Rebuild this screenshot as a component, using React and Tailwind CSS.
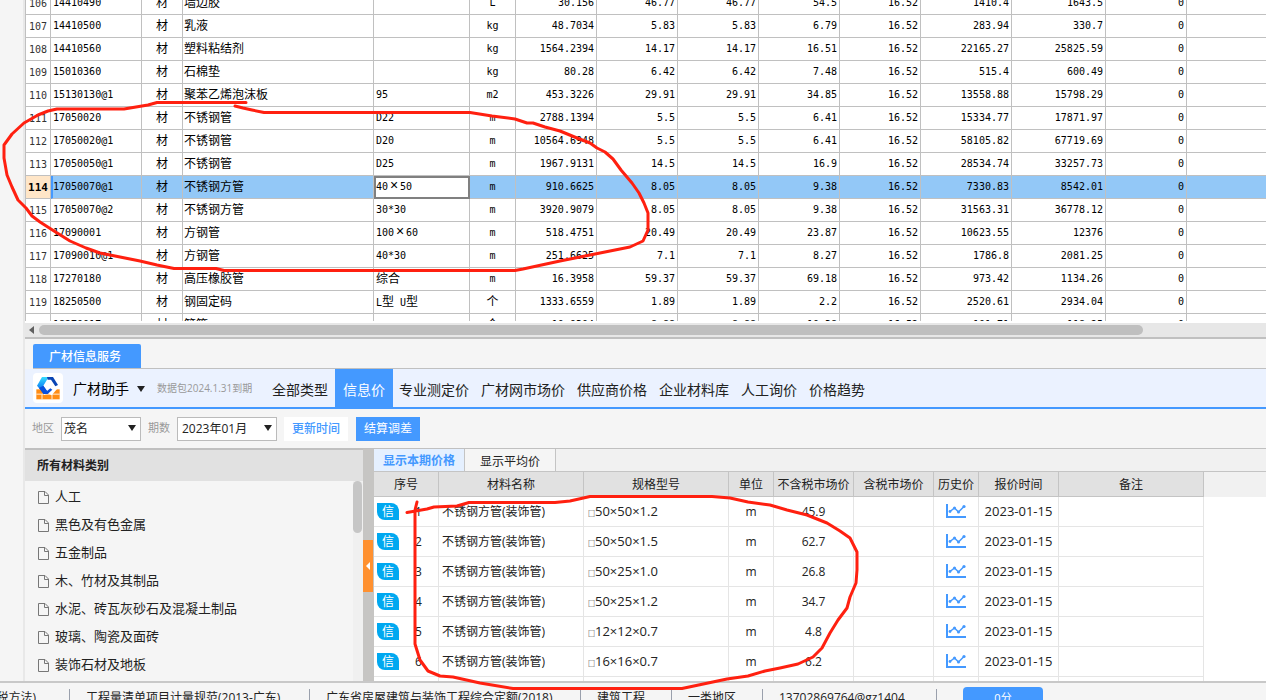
import React, { useState } from 'react';

const materials = [
    ['106', '14410490', '墙边胶', '', 'L', '30.156', '46.77', '46.77', '54.5', '16.52', '1410.4', '1643.5', '0'],
    ['107', '14410500', '乳液', '', 'kg', '48.7034', '5.83', '5.83', '6.79', '16.52', '283.94', '330.7', '0'],
    ['108', '14410560', '塑料粘结剂', '', 'kg', '1564.2394', '14.17', '14.17', '16.51', '16.52', '22165.27', '25825.59', '0'],
    ['109', '15010360', '石棉垫', '', 'kg', '80.28', '6.42', '6.42', '7.48', '16.52', '515.4', '600.49', '0'],
    ['110', '15130130@1', '聚苯乙烯泡沫板', '95', 'm2', '453.3226', '29.91', '29.91', '34.85', '16.52', '13558.88', '15798.29', '0'],
    ['111', '17050020', '不锈钢管', 'D22', 'm', '2788.1394', '5.5', '5.5', '6.41', '16.52', '15334.77', '17871.97', '0'],
    ['112', '17050020@1', '不锈钢管', 'D20', 'm', '10564.6948', '5.5', '5.5', '6.41', '16.52', '58105.82', '67719.69', '0'],
    ['113', '17050050@1', '不锈钢管', 'D25', 'm', '1967.9131', '14.5', '14.5', '16.9', '16.52', '28534.74', '33257.73', '0'],
    ['114', '17050070@1', '不锈钢方管', '40×50', 'm', '910.6625', '8.05', '8.05', '9.38', '16.52', '7330.83', '8542.01', '0'],
    ['115', '17050070@2', '不锈钢方管', '30*30', 'm', '3920.9079', '8.05', '8.05', '9.38', '16.52', '31563.31', '36778.12', '0'],
    ['116', '17090001', '方钢管', '100×60', 'm', '518.4751', '20.49', '20.49', '23.87', '16.52', '10623.55', '12376', '0'],
    ['117', '17090010@1', '方钢管', '40*30', 'm', '251.6625', '7.1', '7.1', '8.27', '16.52', '1786.8', '2081.25', '0'],
    ['118', '17270180', '高压橡胶管', '综合', 'm', '16.3958', '59.37', '59.37', '69.18', '16.52', '973.42', '1134.26', '0'],
    ['119', '18250500', '钢固定码', 'L型 U型', '个', '1333.6559', '1.89', '1.89', '2.2', '16.52', '2520.61', '2934.04', '0'],
    ['120', '18270017', '管箍', '', '个', '10.9304', '8.88', '8.88', '10.38', '16.52', '101.71', '118.25', '0'],
];

const prices = [
    ['1', '50×50×1.2', '45.9'],
    ['2', '50×50×1.5', '62.7'],
    ['3', '50×25×1.0', '26.8'],
    ['4', '50×25×1.2', '34.7'],
    ['5', '12×12×0.7', '4.8'],
    ['6', '16×16×0.7', '6.2'],
];

const priceColumns = ['序号', '材料名称', '规格型号', '单位', '不含税市场价', '含税市场价', '历史价', '报价时间', '备注'];

const navItems = ['全部类型', '信息价', '专业测定价', '广材网市场价', '供应商价格', '企业材料库', '人工询价', '价格趋势'];

const categories = ['人工', '黑色及有色金属', '五金制品', '木、竹材及其制品', '水泥、砖瓦灰砂石及混凝土制品', '玻璃、陶瓷及面砖', '装饰石材及地板'];

const statusItems = [
    ['税方法)', 'flex w-[70px] justify-end pr-[33px]'],
    ['工程量清单项目计量规范(2013-广东)', 'w-60 pl-4'],
    ['广东省房屋建筑与装饰工程综合定额(2018)', 'w-[271px] pl-4'],
    ['建筑工程', 'w-[91px] pl-4'],
    ['一类地区', 'w-[91px] pl-4'],
    ['13702869764@gz1404', 'w-[174px] pl-4'],
];

// Full-width characters take two cells of the grid font
const GridText = ({ children }) =>
    children.split(/([^\x00-\x7f]+)/).filter(Boolean).map((part, i) => {
        if (part === '×') return <span key={i} className="inline-block w-3 text-center font-['Liberation_Sans',sans-serif] text-sm leading-3">×</span>;
        return /[^\x00-\x7f]/.test(part)
            ? <span key={i} className="font-['Noto_Sans_CJK_SC',sans-serif] text-xs leading-4">{part}</span>
            : <span key={i}>{part}</span>;
    });

const MaterialTable = ({ selected, onSelect }) => (
    <table className="w-full -mt-2 table-fixed border-separate border-spacing-0 border-l border-[#c0c0c0] bg-white font-['DejaVu_Sans_Mono',monospace] text-[10px] leading-4 text-black whitespace-pre">
        <colgroup>
            <col className="w-[25px]" />
            <col className="w-[91px]" />
            <col className="w-[41px]" />
            <col className="w-[191px]" />
            <col className="w-[96px]" />
            <col className="w-[46px]" />
            <col className="w-[81px]" />
            <col className="w-[81px]" />
            <col className="w-[81px]" />
            <col className="w-[81px]" />
            <col className="w-[81px]" />
            <col className="w-[91px]" />
            <col className="w-[94px]" />
            <col className="w-[81px]" />
            <col />
        </colgroup>
        <tbody>
            {materials.map(([no, code, name, spec, unit, ...numbers]) => {
                const active = no === selected;
                const cell = 'h-[23px] p-0 border-r border-b border-[#c0c0c0]';
                return (
                    <tr key={no} onClick={() => onSelect(no)} className={active ? 'bg-[#93c8f7]' : 'bg-white'}>
                        <th className={`${cell} pt-0.5 text-center ${active ? 'bg-[#ffe6c8] text-[11px] font-bold' : 'font-normal text-[#333]'}`}>{no}</th>
                        <td className={`${cell} ${active ? 'border-l-2 border-l-[#4499ff]' : 'pl-0.5'}`}>{code}</td>
                        <td className={`${cell} text-center`}><GridText>材</GridText></td>
                        <td className={`${cell} pl-px`}><GridText>{name}</GridText></td>
                        <td className={`${cell} ${active ? 'bg-white outline-2 -outline-offset-2 outline-[#808080]' : ''} pl-0.5`}><GridText>{spec}</GridText></td>
                        <td className={`${cell} text-center`}><GridText>{unit}</GridText></td>
                        {numbers.map((n, i) => (
                            <td key={i} className={`${cell} pr-0.5 text-right`}>{n}</td>
                        ))}
                        <td className="h-[23px] p-0 border-b border-[#c0c0c0]"></td>
                    </tr>
                );
            })}
        </tbody>
    </table>
);

const Caret = ({ className }) => (
    <svg viewBox="0 0 8 6" className={`w-2 h-1.5 fill-[#222] ${className || ''}`}><path d="M0 0H8L4 6Z" /></svg>
);

const Logo = () => (
    <svg viewBox="0 0 90 90" className="w-[30px] h-[30px]">
        <defs>
            <linearGradient id="crane" x1="0" y1="0" x2="0" y2="1">
                <stop offset="0" stopColor="#35dcff" />
                <stop offset="0.45" stopColor="#1a9cf8" />
                <stop offset="1" stopColor="#0a50dc" />
            </linearGradient>
        </defs>
        <rect width="90" height="90" rx="12" fill="#fff" />
        <path d="M10 49H80V79H10Z" fill="#ff8c14" />
        <path d="M10 63.5H80M27 64V79M57 64V79" stroke="#fff" strokeWidth="2.5" />
        <path d="M26 46H74L56 67L44 60L34 66Z" fill="#fff" />
        <path d="M27 12H47L31 38L44 56L33 63L12 38Z" fill="url(#crane)" />
        <path d="M42 12H60L75 36L67 40L54 20H44Z" fill="#0a45b4" />
        <path d="M18 45L31 38L42 54L52 46L58 50L44 63H31Z" fill="#0a50dc" />
    </svg>
);

const ChartIcon = () => (
    <svg viewBox="0 0 20 14" className="w-5 h-3.5" fill="none" stroke="#4499ff">
        <path d="M1 0V13H20" strokeWidth="2" />
        <path d="M4 7.5L8.5 4L12.5 8L18 2.5" strokeWidth="1.5" />
        <g fill="#4499ff" stroke="none">
            <circle cx="4" cy="7.5" r="1.4" />
            <circle cx="8.5" cy="4" r="1.5" />
            <circle cx="12.5" cy="8" r="1.5" />
            <circle cx="18" cy="2.5" r="1.6" />
        </g>
    </svg>
);

const FileIcon = () => (
    <svg viewBox="0 0 11 13" className="w-[11px] h-[13px]" fill="none" stroke="#777">
        <path d="M0.5 0.5H7L10.5 4V12.5H0.5Z M6.5 0.5V4.5H10.5" />
    </svg>
);

const Toolbar = ({ tab, onTab }) => (
    <div className="flex h-10 shrink-0 items-center border-b-2 border-[#4499ff] bg-[#ebf2ff] pl-2 whitespace-nowrap">
        <Logo />
        <button className="ml-2.5 flex items-center gap-2 pt-0.5 text-sm text-black">
            广材助手
            <Caret />
        </button>
        <span className="ml-3 w-[109px] text-[10px] text-[#999]">数据包2024.1.31到期</span>
        <nav className="flex h-full">
            {navItems.map((item) => (
                <button
                    key={item}
                    onClick={() => onTab(item)}
                    className={`h-full pt-1 text-sm ${item === tab ? 'ml-px bg-[#4499ff] px-2 text-white' : 'px-1.5 text-[#222]'}`}
                >
                    {item}
                </button>
            ))}
        </nav>
    </div>
);

const Filters = () => (
    <div className="flex h-[39px] shrink-0 items-center pl-[7px] text-xs whitespace-nowrap">
        <label htmlFor="region" className="w-[29px] text-[11px] text-[#999]">地区</label>
        <div className="relative">
            <select id="region" className="block h-6 w-20 appearance-none border border-[#bbb] bg-white pl-0.5 text-[#222]">
                <option>茂名</option>
            </select>
            <Caret className="pointer-events-none absolute right-[5px] top-2" />
        </div>
        <label htmlFor="period" className="ml-[7px] w-[29px] text-[11px] text-[#999]">期数</label>
        <div className="relative">
            <select id="period" className="block h-6 w-[100px] appearance-none border border-[#bbb] bg-white pl-1 text-[#222]">
                <option>2023年01月</option>
            </select>
            <Caret className="pointer-events-none absolute right-[5px] top-2" />
        </div>
        <button className="ml-[7px] h-6 bg-white px-2 font-medium text-[#4499ff]">更新时间</button>
        <button className="ml-2 h-6 bg-[#4499ff] px-2 text-white">结算调差</button>
    </div>
);

const Sidebar = () => (
    <aside className="flex w-[338px] shrink-0 flex-col border-t border-[#c0c0c0]">
        <h2 className="h-[31px] shrink-0 bg-[#e1e1e1] pl-3 text-xs leading-[31px] font-bold text-[#222]">所有材料类别</h2>
        <div className="flex min-h-0 flex-1 overflow-hidden">
            <ul className="flex-1 pt-0.5">
                {categories.map((name) => (
                    <li key={name} className="flex h-7 items-center gap-1.5 pl-[13px] text-[13px] text-[#222]">
                        <FileIcon />
                        {name}
                    </li>
                ))}
            </ul>
            <div className="w-2.5 bg-[#f0f0f0]">
                <div className="h-[52px] w-[9px] rounded-full bg-[#c6c6c6]"></div>
            </div>
        </div>
    </aside>
);

const PriceTable = () => {
    const head = 'h-[25px] p-0 pt-0.5 border-r border-b border-[#c4c4c4] bg-[#e1e1e1] font-normal';
    const cell = 'h-[30px] p-0 border-r border-b border-[#e5e5e5]';
    return (
        <table className="w-full table-fixed border-separate border-spacing-0 text-xs leading-4 text-[#222] whitespace-nowrap">
            <colgroup>
                <col className="w-[65px]" />
                <col className="w-[145px]" />
                <col className="w-[145px]" />
                <col className="w-[45px]" />
                <col className="w-20" />
                <col className="w-20" />
                <col className="w-[45px]" />
                <col className="w-20" />
                <col className="w-[145px]" />
                <col />
            </colgroup>
            <thead>
                <tr>
                    {priceColumns.map((title) => (
                        <th key={title} className={head}>{title}</th>
                    ))}
                    <th className="bg-[#f1f1f1] p-0"></th>
                </tr>
            </thead>
            <tbody>
                {prices.map(([no, spec, price]) => (
                    <tr key={no} className="bg-white">
                        <td className={cell}>
                            <div className="flex items-center gap-4 pl-[3px]">
                                <span className="h-[17px] w-[22px] rounded-tr-lg rounded-bl-lg bg-[#00a8f0] text-center leading-[17px] text-white">信</span>
                                {no}
                            </div>
                        </td>
                        <td className={`${cell} pl-[3px]`}>不锈钢方管(装饰管)</td>
                        <td className={`${cell} pt-0.5 pl-1 text-[13px]`}>
                            <span className="text-[7px] font-bold">□</span>{spec}
                        </td>
                        <td className={`${cell} text-center`}>m</td>
                        <td className={`${cell} text-center`}>{price}</td>
                        <td className={cell}></td>
                        <td className={`${cell} pb-0.5`}>
                            <button aria-label="历史价" className="mx-auto block"><ChartIcon /></button>
                        </td>
                        <td className={`${cell} pb-0.5 text-center text-[13px]`}>2023-01-15</td>
                        <td className={cell}></td>
                        <td className="p-0"></td>
                    </tr>
                ))}
                <tr>
                    {priceColumns.map((title) => <td key={title} className={cell}></td>)}
                    <td className="p-0"></td>
                </tr>
            </tbody>
        </table>
    );
};

const StatusBar = () => (
    <footer className="h-[19px] shrink-0 overflow-hidden border-t-2 border-[#c8c8c8] bg-[#f5f5f5] text-xs text-[#222]">
        <div className="flex h-[30px] items-center whitespace-nowrap">
            {statusItems.map(([text, size]) => (
                <span key={text} className={`h-[18px] shrink-0 border-r border-[#9aa0ac] leading-[18px] ${size}`}>{text}</span>
            ))}
            <button className="ml-[26px] h-[22px] w-20 rounded bg-[#4499ff] text-[11px] text-white">0分</button>
        </div>
    </footer>
);

// Red pen marks drawn over the window
const PenMarks = () => (
    <svg width="1266" height="700" className="pointer-events-none absolute left-0 top-0" fill="none" stroke="#ff2010" strokeWidth="3" strokeLinecap="round" strokeLinejoin="round">
        <path d="M246 102.500H157L148 105L124 109H57L48 111L38 115L24 123L12 134L4 145V158L7 175L12 187L18 200L26 208L32 216L40 222L54 231L70 241L86 248L100 253L120 257L140 261L157 265L174 268.500H216L224 270.500H515L523 269L560 261L595 254L620 249L630 247L643 241L648 230V213L644 203L639 193L632 183L621 170L613 159L605 152L597 148L590 143L577 138L560 131L545 127L533 123L527 123L515 119L492 116L470 112.500H264L252 110L243 108L235 106" />
        <path d="M407 512.500L427 509L434 507L457 506L469 502.500H555L570 501L590 496.500H712L730 498L748 502L770 505L787 510L807 515L827 523L840 531L850 538L857 552V570L856 583L850 597L847 608L838 620L830 633L822 648L813 657L798 664L780 668L765 671L748 676L727 679L682 688.500H513L480 683L453 677L440 676L428 671L420 660L415 644V510L417 502" />
    </svg>
);

const App = () => {
    const [selected, setSelected] = useState('114');
    const [tab, setTab] = useState('信息价');

    return (
        <div className="relative flex h-screen w-full flex-col overflow-hidden bg-[#f5f5f5] font-['Open_Sans','Noto_Sans_CJK_SC',sans-serif]">
            <div className="flex min-h-0 flex-1">
                <div className="w-[25px] shrink-0 border-r-2 border-[#e8e8e8]"></div>
                <main className="flex min-w-0 flex-1 flex-col">
                    <div className="h-[321px] shrink-0 overflow-hidden bg-white">
                        <MaterialTable selected={selected} onSelect={setSelected} />
                    </div>
                    <div className="flex h-[18px] shrink-0 items-center border-b-2 border-t-2 border-b-[#c0c0c0] border-t-white bg-[#e7e7e7] pl-1">
                        <svg viewBox="0 0 5 8" className="h-2 w-[5px] fill-[#606060]"><path d="M5 0V8L0 4Z" /></svg>
                        <div className="ml-[5px] mr-[123px] h-2.5 flex-1 rounded-full bg-[#bfbfbf]"></div>
                    </div>
                    <div className="ml-2 flex h-[30px] shrink-0 items-end border-b border-[#c0c0c0]">
                        <button className="h-6 w-[108px] rounded-t-xs bg-[#4499ff] pt-0.5 pr-1 text-xs font-medium text-white">广材信息服务</button>
                    </div>
                    <Toolbar tab={tab} onTab={setTab} />
                    <Filters />
                    <div className="flex min-h-0 flex-1 border-t border-[#c0c0c0]">
                        <Sidebar />
                        <div className="w-[11px] shrink-0 bg-[#c6c5c3] pt-[91px]">
                            <button aria-label="收起" className="flex h-[52px] w-2.5 items-center justify-center bg-[#ff9130]">
                                <svg viewBox="0 0 4 8" className="h-2 w-1 fill-white"><path d="M4 0V8L0 4Z" /></svg>
                            </button>
                        </div>
                        <section className="min-w-0 flex-1 overflow-hidden bg-white">
                            <div className="flex h-[23px] border-b border-[#c4c4c4] bg-[#f1f1f1] text-xs">
                                <button className="w-[91px] border-r border-[#c4c4c4] bg-[#e5f0ff] pt-0.5 font-bold text-[#4499ff]">显示本期价格</button>
                                <button className="w-[91px] border-r border-[#c4c4c4] bg-[#f5f5f5] pt-1 text-[#222]">显示平均价</button>
                            </div>
                            <PriceTable />
                        </section>
                    </div>
                </main>
            </div>
            <StatusBar />
            <PenMarks />
        </div>
    );
};

export default App;
